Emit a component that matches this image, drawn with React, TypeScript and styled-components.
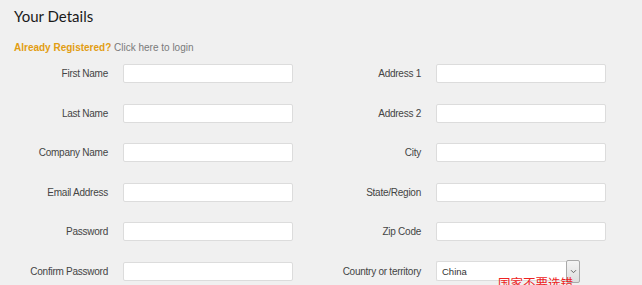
import { Fragment } from 'react';
import { createGlobalStyle, styled } from 'styled-components';

const GlobalStyle = createGlobalStyle`
	html, body {
		margin: 0;
		padding: 0;
		background: #f0f0f0;
	}
	body {
		font-family: 'Liberation Sans', Arial, sans-serif;
	}
`;

const Page = styled.div`
	padding: 7px 0 0 14px;
	height: 278px;
	overflow: hidden;
`;

const Title = styled.h2`
	margin: 0;
	font-family: Lato, 'Open Sans', sans-serif;
	font-weight: 400;
	font-size: 15px;
	line-height: 18px;
	color: #1a1a1a;
`;

const LoginLine = styled.p`
	margin: 17px 0 0;
	font-size: 10px;
	line-height: 12px;
`;

const Registered = styled.strong`
	color: #e29d12;
	font-weight: 700;
`;

const LoginLink = styled.a`
	color: #7a7a7a;
	text-decoration: none;
	cursor: pointer;
`;

const Form = styled.form`
	display: grid;
	grid-template-columns: 94px 170px 113px 170px;
	column-gap: 15px;
	row-gap: 20.5px;
	align-items: center;
	margin-top: 10px;
`;

const Label = styled.label`
	justify-self: end;
	font-size: 10px;
	letter-spacing: -0.25px;
	color: #444;
	white-space: nowrap;
`;

const TextInput = styled.input`
	box-sizing: border-box;
	width: 170px;
	height: 19px;
	margin: 0;
	background: #fff;
	border: 1px solid #dcdcdc;
	border-radius: 2px;
	padding: 0 5px;
	font: inherit;
	font-size: 9.5px;
	outline: none;
`;

const SelectWrap = styled.div`
	position: relative;
	display: flex;
	align-items: center;
	width: 144px;
	height: 19px;
`;

const SelectBox = styled.div`
	box-sizing: border-box;
	flex: 1;
	height: 20px;
	background: #fff;
	border: 1px solid #dcdcdc;
	border-right: none;
	border-radius: 2px 0 0 2px;
	padding-left: 5px;
	display: flex;
	align-items: center;
	font-size: 9.5px;
	color: #333;
`;

const DropButton = styled.span`
	box-sizing: border-box;
	width: 14px;
	height: 23px;
	display: flex;
	align-items: center;
	justify-content: center;
	background: linear-gradient(#f4f4f4, #dedede);
	border: 1px solid #a9a9a9;
	border-radius: 2px;
	color: #666;
`;

const Note = styled.span`
	position: absolute;
	left: 62px;
	top: 13px;
	font-family: 'Noto Sans CJK SC', sans-serif;
	font-size: 12.5px;
	line-height: 16px;
	color: #ee2222;
	white-space: nowrap;
	pointer-events: none;
`;

const rows: [string, string][] = [
	['First Name', 'Address 1'],
	['Last Name', 'Address 2'],
	['Company Name', 'City'],
	['Email Address', 'State/Region'],
	['Password', 'Zip Code'],
];

const App = () => {
	return (
		<>
			<GlobalStyle />
			<Page>
				<Title>Your Details</Title>
				<LoginLine>
					<Registered>Already Registered?</Registered>{' '}
					<LoginLink>Click here to login</LoginLink>
				</LoginLine>
				<Form>
					{rows.map(([left, right]) => (
						<Fragment key={left}>
							<Label>{left}</Label>
							<TextInput type={left === 'Password' ? 'password' : 'text'} />
							<Label>{right}</Label>
							<TextInput type='text' />
						</Fragment>
					))}
					<Label>Confirm Password</Label>
					<TextInput type='password' />
					<Label>Country or territory</Label>
					<SelectWrap>
						<SelectBox>China</SelectBox>
						<DropButton>
							<svg width='7' height='5' viewBox='0 0 7 5' fill='none'>
								<path d='M1 1.2 3.5 3.7 6 1.2' stroke='currentColor' strokeWidth='1' />
							</svg>
						</DropButton>
						<Note>国家不要选错</Note>
					</SelectWrap>
				</Form>
			</Page>
		</>
	);
};

export default App;
